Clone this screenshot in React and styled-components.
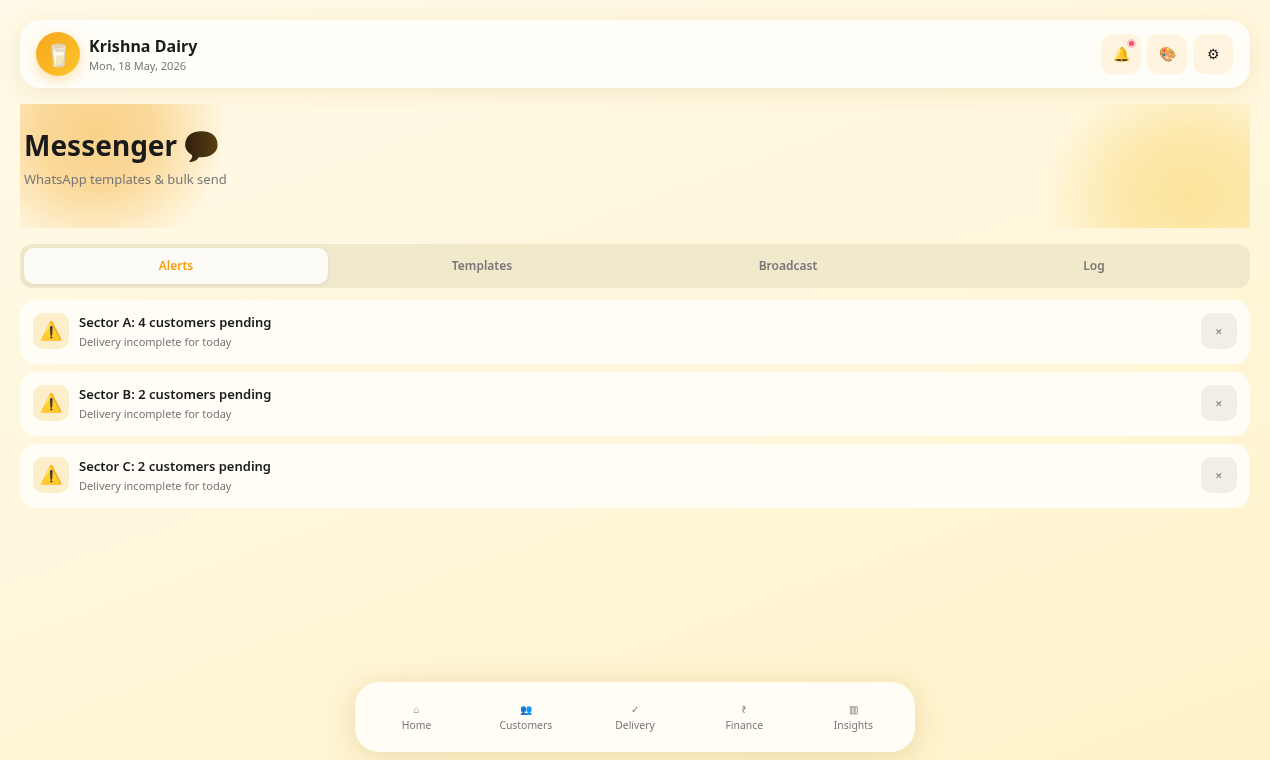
import React from 'react';
import styled, { createGlobalStyle } from 'styled-components';

const alerts = [
  { id: 'a', title: 'Sector A: 4 customers pending' },
  { id: 'b', title: 'Sector B: 2 customers pending' },
  { id: 'c', title: 'Sector C: 2 customers pending' },
];

const tabs = ['Alerts', 'Templates', 'Broadcast', 'Log'];

const navItems = [
  { icon: '⌂', label: 'Home' },
  { icon: '👥', label: 'Customers' },
  { icon: '✓', label: 'Delivery' },
  { icon: '₹', label: 'Finance' },
  { icon: '▥', label: 'Insights' },
];

function App() {
  return (
    <Page>
      <GlobalStyle />
      <Header>
        <Brand>
          <Avatar>🥛</Avatar>
          <BrandText>
            <BrandName>Krishna Dairy</BrandName>
            <BrandDate>Mon, 18 May, 2026</BrandDate>
          </BrandText>
        </Brand>
        <HeaderActions>
          <RoundAction>
            🔔
            <NotifyDot />
          </RoundAction>
          <RoundAction>🎨</RoundAction>
          <RoundAction>⚙</RoundAction>
        </HeaderActions>
      </Header>

      <Hero>
        <HeroTitle>
          Messenger <Bubble>💬</Bubble>
        </HeroTitle>
        <HeroSub>WhatsApp templates &amp; bulk send</HeroSub>
      </Hero>

      <TabBar>
        {tabs.map((tab, i) => (
          <Tab key={tab} $active={i === 0}>{tab}</Tab>
        ))}
      </TabBar>

      <AlertList>
        {alerts.map((alert) => (
          <AlertCard key={alert.id}>
            <AlertIcon>⚠️</AlertIcon>
            <AlertBody>
              <AlertTitle>{alert.title}</AlertTitle>
              <AlertText>Delivery incomplete for today</AlertText>
            </AlertBody>
            <DismissButton>✕</DismissButton>
          </AlertCard>
        ))}
      </AlertList>

      <BottomNav>
        {navItems.map((item) => (
          <NavItem key={item.label}>
            <NavIcon>{item.icon}</NavIcon>
            <NavLabel>{item.label}</NavLabel>
          </NavItem>
        ))}
      </BottomNav>
    </Page>
  );
}

export default App;

const GlobalStyle = createGlobalStyle`
  * { box-sizing: border-box; }
  html, body { margin: 0; padding: 0; height: 100%; }
  body {
    font-family: "Noto Sans", sans-serif;
    color: #1a1a1a;
    background: linear-gradient(160deg, #fffae8 0%, #fff7dc 50%, #fef2c8 100%);
    overflow: hidden;
  }
`;

const Page = styled.div`
  height: 760px;
  padding: 20px;
  will-change: transform;
`;

const Header = styled.header`
  display: flex;
  align-items: center;
  justify-content: space-between;
  height: 68px;
  padding: 0 17px 0 16px;
  background: #fffdf7;
  border-radius: 20px;
  box-shadow: 0 4px 24px rgba(180, 130, 30, 0.14);
`;

const Brand = styled.div`
  display: flex;
  align-items: center;
  gap: 9px;
`;

const Avatar = styled.div`
  display: flex;
  align-items: center;
  justify-content: center;
  width: 44px;
  height: 44px;
  border-radius: 50%;
  font-size: 22px;
  background: linear-gradient(135deg, #f8a51b, #fcc62d);
  box-shadow: 0 4px 12px rgba(245, 158, 11, 0.3);
`;

const BrandText = styled.div`
  padding-top: 1px;
`;

const BrandName = styled.div`
  font-size: 16px;
  font-weight: 700;
  line-height: 22px;
  letter-spacing: 0.08px;
`;

const BrandDate = styled.div`
  font-size: 11px;
  line-height: 16px;
  color: #777;
  margin-top: 1px;
`;

const HeaderActions = styled.div`
  display: flex;
  gap: 6px;
`;

const RoundAction = styled.button`
  position: relative;
  display: flex;
  align-items: center;
  justify-content: center;
  width: 40px;
  height: 40px;
  padding: 0 0 1px;
  border: 0;
  border-radius: 12px;
  font-family: inherit;
  font-size: 14px;
  color: #1a1a1a;
  background: #fff4e0;
`;

const NotifyDot = styled.span`
  position: absolute;
  top: 7px;
  right: 7px;
  width: 5px;
  height: 5px;
  border-radius: 50%;
  background: #f4516c;
  box-shadow: 0 0 0 2px rgba(244, 81, 108, 0.25);
`;

const Hero = styled.section`
  height: 124px;
  margin-top: 16px;
  padding: 21px 4px 0;
  background:
    radial-gradient(ellipse 132px 125px at 75px 30px, #fad188 0%, rgba(250, 209, 136, 0.8) 45%, rgba(250, 209, 136, 0) 100%),
    radial-gradient(ellipse 145px 125px at 1170px 90px, #fce39a 0%, rgba(252, 227, 154, 0.7) 50%, rgba(252, 227, 154, 0) 100%);
`;

const HeroTitle = styled.h1`
  margin: 0;
  font-size: 28px;
  font-weight: 700;
  line-height: 40px;
`;

const Bubble = styled.span`
  background: linear-gradient(90deg, #2d1f0c, #5c3f12);
  -webkit-background-clip: text;
  background-clip: text;
  -webkit-text-fill-color: transparent;
`;

const HeroSub = styled.p`
  margin: 5px 0 0;
  font-size: 13px;
  line-height: 18px;
  color: #777;
`;

const TabBar = styled.nav`
  display: flex;
  gap: 2px;
  margin-top: 16px;
  padding: 4px;
  background: #f0e9cc;
  border-radius: 12px;
`;

const Tab = styled.div`
  flex: 1;
  height: 36px;
  border-radius: 10px;
  font-size: 12px;
  font-weight: 600;
  line-height: 36px;
  text-align: center;
  color: ${(p) => (p.$active ? '#f59e0b' : '#777')};
  background: ${(p) => (p.$active ? '#fdfbf5' : 'transparent')};
  box-shadow: ${(p) => (p.$active ? '0 1px 4px rgba(120, 90, 20, 0.1)' : 'none')};
`;

const AlertList = styled.div`
  display: flex;
  flex-direction: column;
  gap: 8px;
  margin-top: 12px;
`;

const AlertCard = styled.article`
  display: flex;
  align-items: flex-start;
  gap: 10px;
  height: 64px;
  padding: 13px;
  background: #fffdf6;
  border-radius: 16px;
`;

const AlertIcon = styled.div`
  display: flex;
  align-items: center;
  justify-content: center;
  flex: none;
  width: 36px;
  height: 36px;
  padding-bottom: 2px;
  border-radius: 10px;
  font-size: 18px;
  background: #fdeecb;
`;

const AlertBody = styled.div`
  flex: 1;
`;

const AlertTitle = styled.div`
  font-size: 13px;
  font-weight: 600;
  line-height: 18px;
`;

const AlertText = styled.div`
  margin-top: 3px;
  font-size: 11px;
  line-height: 15px;
  color: #777;
`;

const DismissButton = styled.button`
  flex: none;
  width: 36px;
  height: 36px;
  padding: 0;
  border: 0;
  border-radius: 10px;
  font-family: inherit;
  font-size: 9px;
  color: #777;
  background: #f0eee5;
`;

const BottomNav = styled.nav`
  position: fixed;
  left: 355px;
  bottom: 8px;
  display: flex;
  width: 560px;
  height: 70px;
  padding: 1px 7px 0;
  background: #fffdf6;
  border-radius: 24px;
  box-shadow: 0 4px 28px rgba(180, 130, 30, 0.24);
`;

const NavItem = styled.div`
  flex: 1;
  display: flex;
  flex-direction: column;
  align-items: center;
  justify-content: center;
  gap: 3px;
`;

const NavIcon = styled.span`
  font-size: 10px;
  line-height: 12px;
  color: #777;
`;

const NavLabel = styled.span`
  font-size: 10.4px;
  line-height: 14px;
  color: #777;
`;
